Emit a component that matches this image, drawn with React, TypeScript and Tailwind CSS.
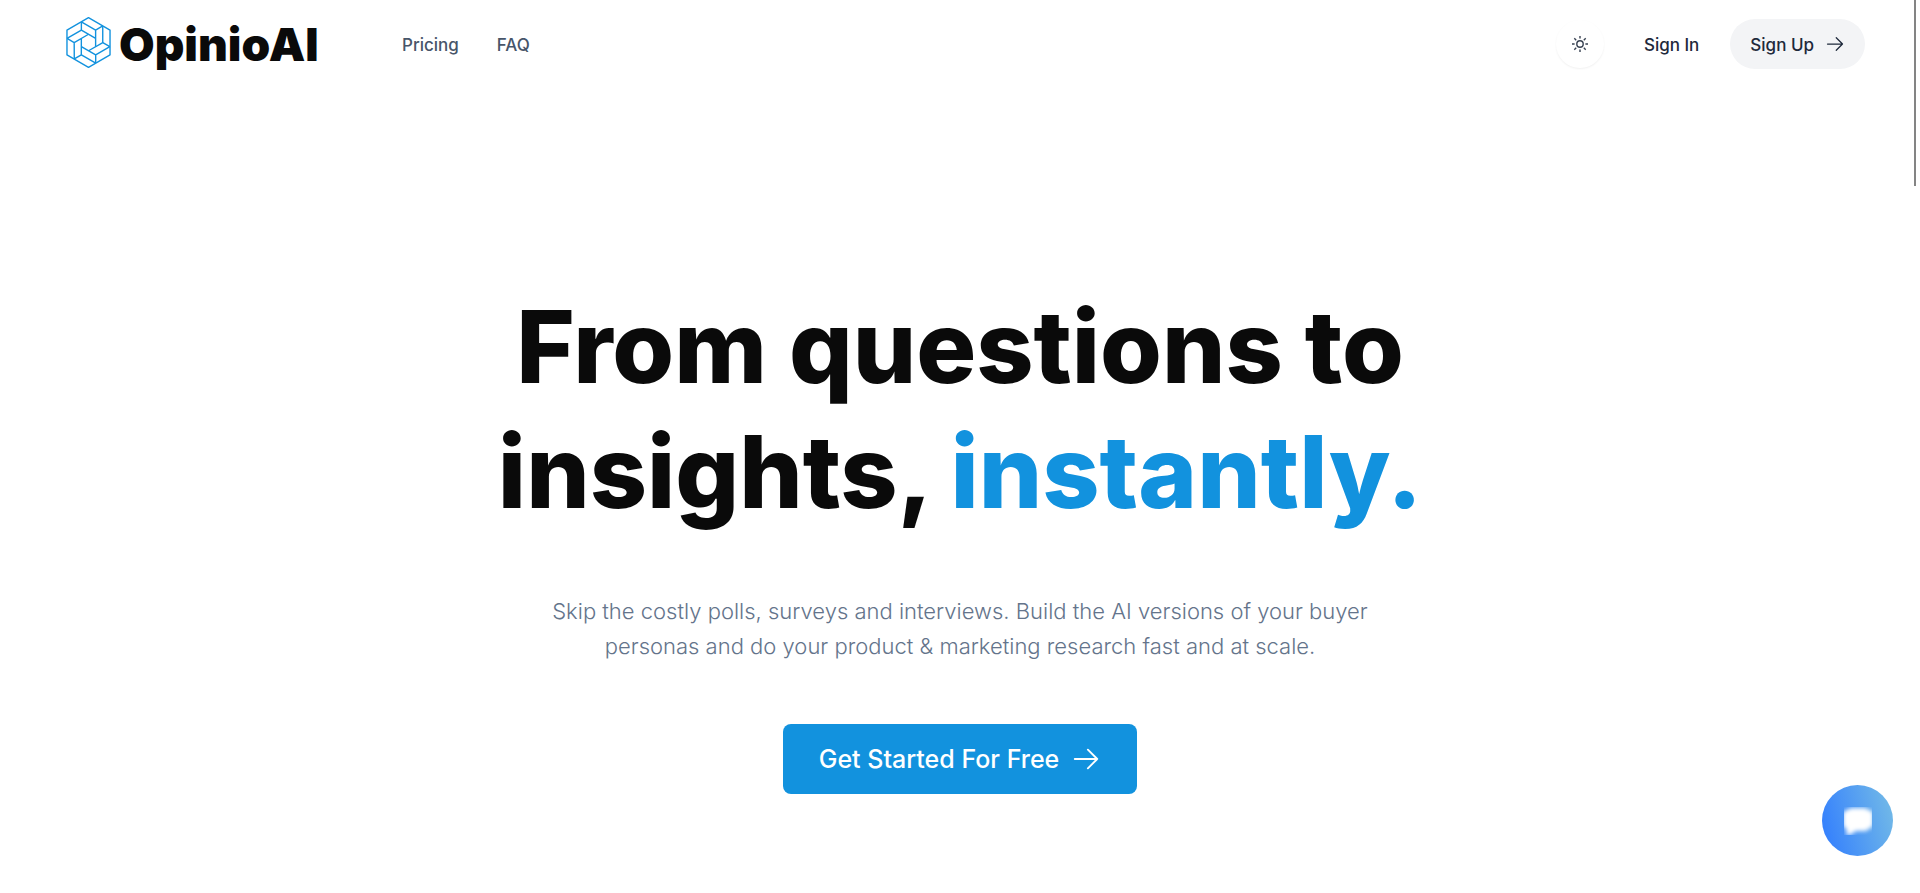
import type { ReactNode } from 'react';

const navLinks = ['Pricing', 'FAQ'];

// one third of the knot, repeated every 120 degrees
const KNOT = 'M-21.5 -62 21.5 -37.5M-21.5 -62V-37.5L21.5 -12.5M43 -50 21.5 -37.5V12.5M43 -50V0';

function LogoMark() {
	return (
		<svg
			viewBox="-67 -77 134 154"
			className="h-[51px] w-[45px] shrink-0"
			fill="none"
			stroke="#1292de"
			strokeWidth="4.2"
			strokeLinejoin="round"
			aria-hidden="true"
		>
			<path d="M0 -75 65 -37.5V37.5L0 75 -65 37.5V-37.5Z" />
			<path d={KNOT} />
			<path d={KNOT} transform="rotate(120)" />
			<path d={KNOT} transform="rotate(240)" />
		</svg>
	);
}

function ArrowIcon({ className }: { className: string }) {
	return (
		<svg
			viewBox="0 0 24 24"
			className={className}
			fill="none"
			stroke="currentColor"
			strokeWidth="1.5"
			strokeLinecap="round"
			strokeLinejoin="round"
			aria-hidden="true"
		>
			<path d="M13.5 4.5 21 12l-7.5 7.5M21 12H3" />
		</svg>
	);
}

function SunIcon() {
	return (
		<svg
			viewBox="0 0 16 16"
			className="h-4 w-4"
			fill="none"
			stroke="currentColor"
			strokeWidth="1.4"
			aria-hidden="true"
		>
			<circle cx="8" cy="8" r="3.2" />
			<path d="M8 0v2.6M8 13.4V16M0 8h2.6M13.4 8H16M2.3 2.3l1.9 1.9M11.8 11.8l1.9 1.9M2.3 13.7l1.9-1.9M11.8 4.2l1.9-1.9" />
		</svg>
	);
}

function NavLink({ children }: { children: ReactNode }) {
	return (
		<a href="#" className="text-[#475569]">
			{children}
		</a>
	);
}

function Header() {
	return (
		<header className="flex h-[88px] w-full items-center justify-between pl-[66px] pr-[55px] text-[17px] font-medium">
			<div className="flex items-center gap-20">
				<a href="#" className="flex w-64 items-center gap-2 pb-1 text-[#0a0a0a]">
					<LogoMark />
					<span className="pt-1 text-[46px] font-black leading-none">OpinioAI</span>
				</a>
				<nav className="flex items-center gap-[38px] pt-1">
					{navLinks.map((label) => (
						<NavLink key={label}>{label}</NavLink>
					))}
				</nav>
			</div>
			<div className="flex items-center text-[#1e293b]">
				<button
					type="button"
					aria-label="Toggle theme"
					className="mr-10 flex h-12 w-12 items-center justify-center rounded-full bg-white text-[#374151] shadow-[0_1px_2px_rgba(0,0,0,0.06)]"
				>
					<SunIcon />
				</button>
				<a href="#" className="mr-[31px] pt-1">
					Sign In
				</a>
				<a href="#" className="flex h-[50px] items-center gap-[11px] rounded-full bg-[#f3f4f6] px-5">
					<span className="pt-1">Sign Up</span>
					<ArrowIcon className="h-5 w-5" />
				</a>
			</div>
		</header>
	);
}

function Hero() {
	return (
		<main className="flex w-full flex-col items-center px-8 pt-[196px] text-center">
			<h1 className="text-[100px] font-extrabold leading-[125px] text-[#0a0a0a]">
				From questions to
				<br />
				insights, <span className="text-[#1292de]">instantly.</span>
			</h1>
			<p className="pt-15 text-[22px] font-light leading-[35px] text-[#64748b]">
				Skip the costly polls, surveys and interviews. Build the AI versions of your buyer
				<br />
				personas and do your product &amp; marketing research fast and at scale.
			</p>
			<button
				type="button"
				className="mt-15 flex h-[70px] items-center gap-3 rounded-lg bg-[#1292de] px-9 text-[25px] font-medium text-white"
			>
				<span className="pt-0.5">Get Started For Free</span>
				<ArrowIcon className="h-[30px] w-[30px]" />
			</button>
		</main>
	);
}

function ChatButton() {
	return (
		<button
			type="button"
			aria-label="Open chat"
			className="fixed bottom-[37px] right-[27px] flex h-[71px] w-[71px] items-center justify-center rounded-full bg-linear-[75deg,#2f7bff,#76bde6]"
		>
			<svg viewBox="0 0 28 28" className="h-7 w-7 overflow-hidden" aria-hidden="true">
				<path
					d="M7 1H21L29 5V19L22 24H12L6 28H2L3 23L-1 19V5Z"
					fill="#fff"
					className="blur-[2px]"
				/>
			</svg>
		</button>
	);
}

function App() {
	return (
		<div className="min-h-screen w-full bg-white font-['Inter',sans-serif]">
			<Header />
			<Hero />
			<ChatButton />
			<div className="fixed right-1 top-0 h-[186px] w-0.5 bg-[#848484]" />
		</div>
	);
}

export default App;
